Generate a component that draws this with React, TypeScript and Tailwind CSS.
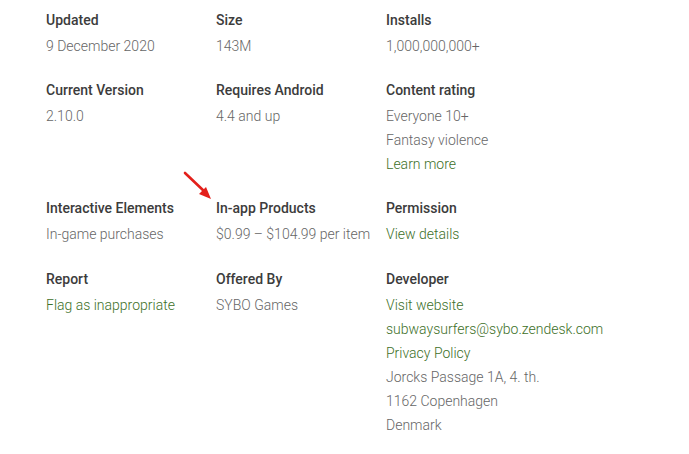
import React from "react";

type Line = { text: string; link?: boolean };
type Cell = { title: string; lines: Line[] };

const rows: Cell[][] = [
  [
    { title: "Updated", lines: [{ text: "9 December 2020" }] },
    { title: "Size", lines: [{ text: "143M" }] },
    { title: "Installs", lines: [{ text: "1,000,000,000+" }] },
  ],
  [
    { title: "Current Version", lines: [{ text: "2.10.0" }] },
    { title: "Requires Android", lines: [{ text: "4.4 and up" }] },
    {
      title: "Content rating",
      lines: [
        { text: "Everyone 10+" },
        { text: "Fantasy violence" },
        { text: "Learn more", link: true },
      ],
    },
  ],
  [
    { title: "Interactive Elements", lines: [{ text: "In-game purchases" }] },
    { title: "In-app Products", lines: [{ text: "$0.99 – $104.99 per item" }] },
    { title: "Permission", lines: [{ text: "View details", link: true }] },
  ],
  [
    { title: "Report", lines: [{ text: "Flag as inappropriate", link: true }] },
    { title: "Offered By", lines: [{ text: "SYBO Games" }] },
    {
      title: "Developer",
      lines: [
        { text: "Visit website", link: true },
        { text: "subwaysurfers@sybo.zendesk.com", link: true },
        { text: "Privacy Policy", link: true },
        { text: "Jorcks Passage 1A, 4. th." },
        { text: "1162 Copenhagen" },
        { text: "Denmark" },
      ],
    },
  ],
];

export default function App() {
  return (
    <div
      className="relative w-[689px] h-[454px] bg-white overflow-hidden"
      style={{ fontFamily: "Roboto, 'Noto Sans', sans-serif" }}
    >
      <div className="flex flex-col gap-5 pt-2 pl-[46px]">
        {rows.map((row, ri) => (
          <div
            key={ri}
            className={
              "grid grid-cols-[170px_170px_200px]" + (ri === 3 ? " mt-px" : "")
            }
          >
            {row.map((cell, ci) => (
              <div key={ci} className="flex flex-col">
                <div className="text-[14px] leading-6 font-medium text-[#3c3c3c] mb-[2px] whitespace-nowrap">
                  {cell.title}
                </div>
                {cell.lines.map((l, li) => (
                  <div
                    key={li}
                    className={
                      "text-[14px] leading-6 font-light whitespace-nowrap " +
                      (l.link ? "text-[#3d7028]" : "text-[#666666]")
                    }
                  >
                    {l.text}
                  </div>
                ))}
              </div>
            ))}
          </div>
        ))}
      </div>
      <svg
        className="absolute left-[180px] top-[168px]"
        width="40"
        height="40"
        viewBox="0 0 40 40"
      >
        <line x1="5" y1="5" x2="25" y2="24" stroke="#e3201b" strokeWidth="2.6" strokeLinecap="round" />
        <polygon points="31,31 19,26 26,19" fill="#e3201b" />
      </svg>
    </div>
  );
}
